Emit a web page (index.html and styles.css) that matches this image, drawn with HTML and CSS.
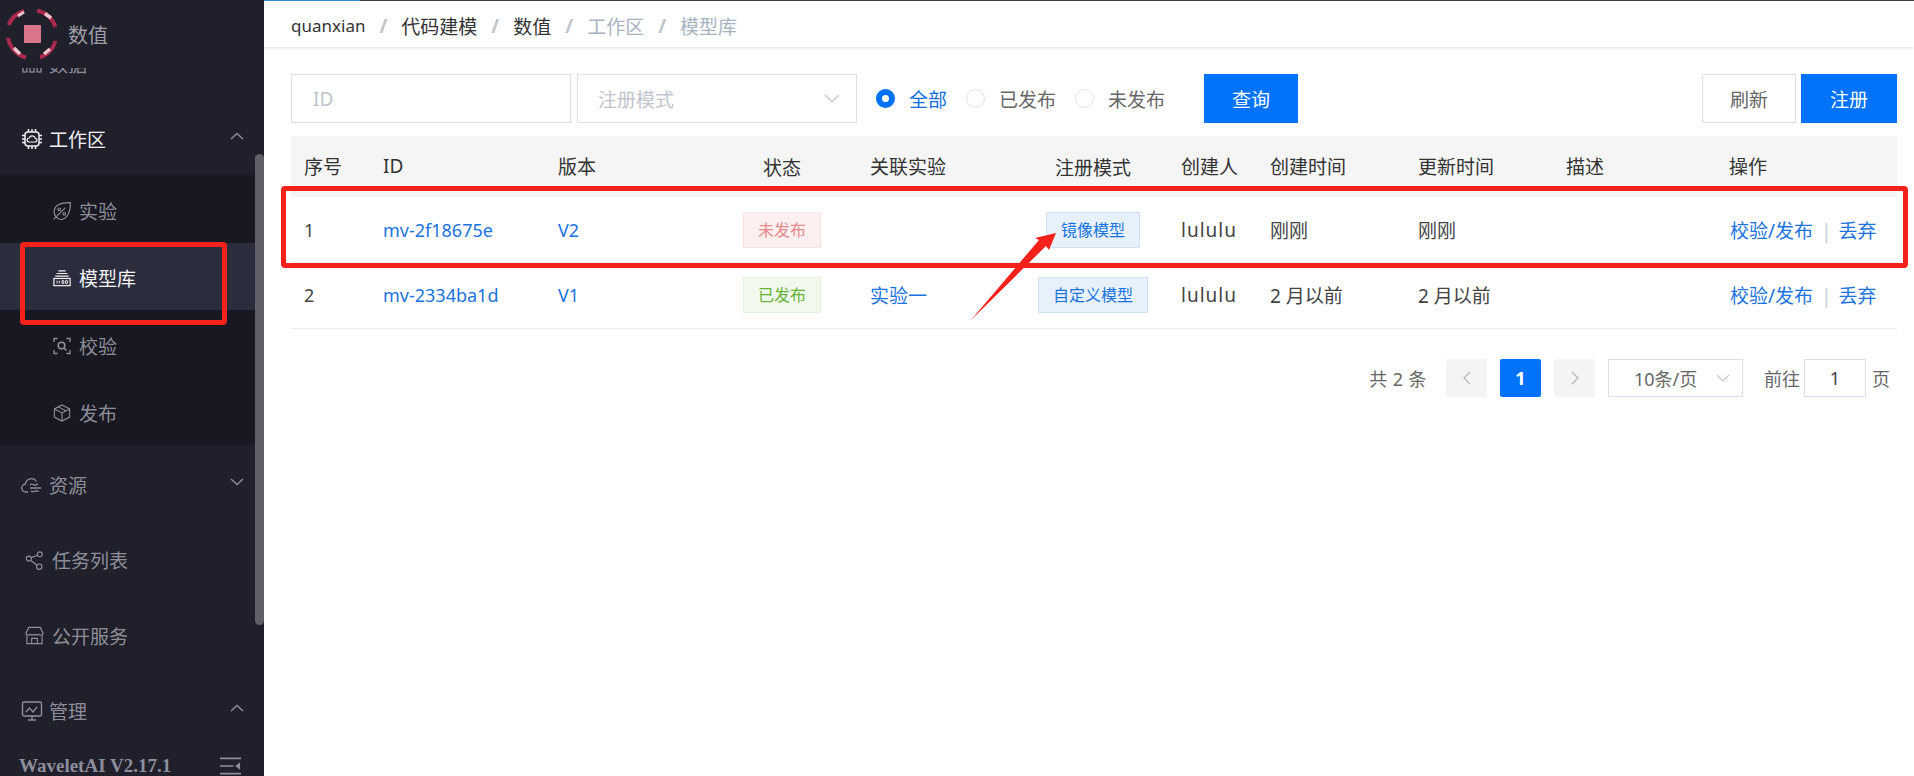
FILE: index.html
```html
<!DOCTYPE html>
<html lang="zh">
<head>
<meta charset="utf-8">
<title>模型库</title>
<link rel="stylesheet" href="styles.css">
</head>
<body>
<div class="app">
  <aside class="sidebar">
    <div class="brand">
      <svg class="logo" viewBox="0 0 52 52" width="52" height="52">
        <rect x="18" y="17" width="17" height="18" fill="#d8758a"/>
        <g fill="none" stroke-width="4">
          <path d="M2.500 17 A25 25 0 0 1 18 3" stroke="#a92a4d"/>
          <path d="M31 2.500 A25 25 0 0 1 49.500 19" stroke="#a92a4d"/>
          <path d="M49.500 33 A25 25 0 0 1 34 49.500" stroke="#a92a4d"/>
          <path d="M20 49.500 A25 25 0 0 1 2 30" stroke="#a92a4d"/>
          <path d="M39 5.500 L45 10" stroke="#eec3cb" stroke-width="3.500"/>
          <path d="M8 40 L14 46" stroke="#eec3cb" stroke-width="3.500"/>
          <path d="M38 46 L44 41" stroke="#eec3cb" stroke-width="3.500"/>
          <path d="M12 8 L18 4" stroke="#eec3cb" stroke-width="3"/>
        </g>
      </svg>
      <span class="brand-name">数值</span>
    </div>
    <nav class="menu">
      <div class="menu-row menu-clipped">
        <svg class="icon-top" viewBox="0 0 22 22" fill="none" stroke="currentColor" stroke-width="1.300"><rect x="2" y="5" width="4" height="14"/><rect x="9" y="5" width="4" height="14"/><rect x="16" y="5" width="4" height="14"/></svg>
        <span>数据</span>
      </div>
      <div class="menu-row menu-open">
        <svg class="icon-top" viewBox="0 0 22 22" fill="none" stroke="currentColor" stroke-width="1.500"><rect x="4" y="4" width="14" height="14" rx="3"/><path d="M7.500 1v3M11 1v3M14.500 1v3M7.500 18v3M11 18v3M14.500 18v3M1 7.500h3M1 11h3M1 14.500h3M18 7.500h3M18 11h3M18 14.500h3"/><path d="M8 14h6a1.800 1.800 0 0 0 .3-3.600A3.200 3.200 0 0 0 8.200 10 2 2 0 0 0 8 14z" stroke-width="1.200"/></svg>
        <span>工作区</span>
        <svg class="chev" viewBox="0 0 14 8" fill="none" stroke="currentColor" stroke-width="1.500"><path d="M1 7l6-5.500L13 7"/></svg>
      </div>
      <div class="submenu">
        <div class="sub-row">
          <svg class="icon-sub" viewBox="1 1 16 16" fill="none" stroke="currentColor" stroke-width="1"><path d="M2 9.500C2 5 6 1.500 16.500 1.500 16.500 11 13 16.500 8 16.500 4.500 16.500 2 13.500 2 9.500z"/><path d="M1.500 16.500 12 6"/><circle cx="6.500" cy="7.500" r="1.200"/><circle cx="11" cy="11.500" r="1.200"/></svg>
          <span>实验</span>
        </div>
        <div class="sub-row sub-active">
          <svg class="icon-sub" viewBox="0 0 20 20" fill="none" stroke="currentColor" stroke-width="1.300"><path d="M6 2h8M4 5h12M2.500 8h15"/><rect x="1" y="10.500" width="18" height="8"/><path d="M4.500 13v3M7 13v3M10 13h2v3h-2zM14 13h2v3h-2z" stroke-width="1"/></svg>
          <span>模型库</span>
        </div>
        <div class="sub-row">
          <svg class="icon-sub" viewBox="0 0 18 18" fill="none" stroke="currentColor" stroke-width="1.300"><path d="M1 5V1.500h3.500M13.500 1.500H17V5M1 13v3.500h3.500M13.500 16.500H17V13"/><circle cx="8.500" cy="8.500" r="3.300" stroke-width="1.600"/><path d="M11 11l2.500 2.500" stroke-width="1.600"/></svg>
          <span>校验</span>
        </div>
        <div class="sub-row">
          <svg class="icon-sub" viewBox="0 0 20 20" fill="none" stroke="currentColor" stroke-width="1.200"><path d="M10 1l8.500 4.500v9L10 19l-8.500-4.500v-9z"/><path d="M1.500 5.500 10 10l8.500-4.500M10 10v9M6 3.200l8.500 4.600"/></svg>
          <span>发布</span>
        </div>
      </div>
      <div class="menu-row">
        <svg class="icon-top" viewBox="0 0 22 22" fill="none" stroke="currentColor" stroke-width="1.300"><path d="M7 18H5a4 4 0 0 1-.5-8A6 6 0 0 1 15.500 7.500"/><path d="M9 11c2-2 3 0 5 0s2-1 3-1M9 14h11M10 17c2 1.500 3 0 5 0s2 .5 3 0"/></svg>
        <span>资源</span>
        <svg class="chev" viewBox="0 0 14 8" fill="none" stroke="currentColor" stroke-width="1.500"><path d="M1 1l6 5.500L13 1"/></svg>
      </div>
      <div class="menu-row menu-plain">
        <svg class="icon-plain" viewBox="0 0 20 20" fill="none" stroke="currentColor" stroke-width="1.200"><circle cx="4" cy="8" r="2.600"/><circle cx="15.500" cy="3.500" r="2.600"/><circle cx="15" cy="16.500" r="2.800"/><path d="M6.500 7 13.200 4.500M6 10l6.800 5"/></svg>
        <span>任务列表</span>
      </div>
      <div class="menu-row menu-plain">
        <svg class="icon-plain" viewBox="0 0 20 20" fill="none" stroke="currentColor" stroke-width="1.200"><path d="M4 1.500h12l3 6a2.500 2.500 0 0 1-4.500 1.200 3.500 3.500 0 0 1-4.500 0 3.500 3.500 0 0 1-4.500 0A2.500 2.500 0 0 1 1 7.500z"/><path d="M2 10v8.500h16V10M7 18.500V13h6v5.500"/></svg>
        <span>公开服务</span>
      </div>
      <div class="menu-row">
        <svg class="icon-top" viewBox="0 0 22 22" fill="none" stroke="currentColor" stroke-width="1.400"><rect x="1.500" y="2" width="19" height="14" rx="1.500"/><path d="M5 12l3.500-4 3.500 4 4-5M7 20h8M11 16v4"/></svg>
        <span>管理</span>
        <svg class="chev" viewBox="0 0 14 8" fill="none" stroke="currentColor" stroke-width="1.500"><path d="M1 7l6-5.500L13 7"/></svg>
      </div>
    </nav>
    <div class="side-foot">
      <span class="version">WaveletAI V2.17.1</span>
      <svg class="collapse" viewBox="0 0 22 18" fill="none" stroke="currentColor" stroke-width="1.800"><path d="M0 1h22M0 9h14M0 17h22"/><path d="M21 5v8l-5-4z" fill="currentColor" stroke="none"/></svg>
    </div>
    <div class="side-thumb"></div>
  </aside>

  <main class="main">
    <div class="top-line"><div class="top-progress"></div></div>
    <header class="crumbs">
      <span class="crumb-latin">quanxian</span><i>/</i><span>代码建模</span><i>/</i><span>数值</span><i>/</i><span class="crumb-muted">工作区</span><i>/</i><span class="crumb-muted">模型库</span>
    </header>
    <section class="content">
      <div class="filters">
        <div class="field field-id">ID</div>
        <div class="field field-select"><span>注册模式</span>
          <svg class="caret" viewBox="0 0 16 9" fill="none" stroke="currentColor" stroke-width="1.200"><path d="M1 1l7 7 7-7"/></svg>
        </div>
        <div class="radios">
          <label class="radio radio-on"><b></b>全部</label>
          <label class="radio"><b></b>已发布</label>
          <label class="radio"><b></b>未发布</label>
        </div>
        <button class="btn btn-primary btn-query">查询</button>
        <button class="btn btn-plain">刷新</button>
        <button class="btn btn-primary btn-reg">注册</button>
      </div>

      <table class="grid">
        <colgroup>
          <col class="c1"><col class="c2"><col class="c3"><col class="c4"><col class="c5"><col class="c6"><col class="c7"><col class="c8"><col class="c9"><col class="c10"><col class="c11">
        </colgroup>
        <thead>
          <tr>
            <th>序号</th><th>ID</th><th>版本</th><th class="center">状态</th><th>关联实验</th><th class="center">注册模式</th><th>创建人</th><th>创建时间</th><th>更新时间</th><th>描述</th><th>操作</th>
          </tr>
        </thead>
        <tbody>
          <tr>
            <td class="latin">1</td><td class="latin"><a>mv-2f18675e</a></td><td class="latin"><a>V2</a></td>
            <td class="center"><span class="tag tag-red">未发布</span></td><td></td>
            <td class="center"><span class="tag tag-blue">镜像模型</span></td>
            <td class="user">lululu</td><td>刚刚</td><td>刚刚</td><td></td>
            <td class="ops"><a>校验/发布</a><i>|</i><a>丢弃</a></td>
          </tr>
          <tr>
            <td class="latin">2</td><td class="latin"><a>mv-2334ba1d</a></td><td class="latin"><a>V1</a></td>
            <td class="center"><span class="tag tag-green">已发布</span></td><td><a>实验一</a></td>
            <td class="center"><span class="tag tag-blue">自定义模型</span></td>
            <td class="user">lululu</td><td>2 月以前</td><td>2 月以前</td><td></td>
            <td class="ops"><a>校验/发布</a><i>|</i><a>丢弃</a></td>
          </tr>
        </tbody>
      </table>

      <div class="pager">
        <span class="pg-total">共 2 条</span>
        <span class="pg-btn"><svg viewBox="0 0 8 14" fill="none" stroke="currentColor" stroke-width="1.300"><path d="M7 1 1 7l6 6"/></svg></span>
        <span class="pg-btn pg-on">1</span>
        <span class="pg-btn"><svg viewBox="0 0 8 14" fill="none" stroke="currentColor" stroke-width="1.300"><path d="M1 1l6 6-6 6"/></svg></span>
        <span class="pg-size">10条/页<svg class="caret-sm" viewBox="0 0 14 8" fill="none" stroke="currentColor" stroke-width="1.100"><path d="M1 1l6 6 6-6"/></svg></span>
        <span class="pg-label">前往</span>
        <span class="pg-input">1</span>
        <span class="pg-label pg-unit">页</span>
      </div>
    </section>
  </main>

  <div class="mark mark-side"></div>
  <div class="mark mark-row"></div>
  <svg class="mark-arrow" viewBox="0 0 100 100" width="100" height="100"><path d="M94 3 87 20l-3-4L9 90l68-80-4-2z" fill="#f5221b"/></svg>
</div>
</body>
</html>
```

FILE: styles.css
```css
* { box-sizing: border-box; }
html, body { margin: 0; height: 100%; overflow: hidden; }
body { font-family: "Noto Sans", "Noto Sans CJK SC", sans-serif; font-size: 19px; color: #333; background: #fff; }
.app { position: relative; display: flex; width: 1914px; height: 776px; overflow: hidden; }

.sidebar { position: relative; display: flex; flex-direction: column; flex: 0 0 264px; width: 264px; height: 776px; background: #1f202b; color: #8d8e99; font-size: 19px; }
.brand { position: relative; z-index: 1; display: flex; align-items: center; height: 68px; padding: 0 0 0 6px; background: #1f202b; }
.logo { display: block; }
.brand-name { margin-left: 10px; font-size: 20px; color: #9c9da6; }
.menu { flex: 1; min-height: 0; overflow: hidden; }
.menu-row { display: flex; align-items: center; height: 75.5px; padding: 4px 21px 0 21px; }
.menu-clipped { margin-top: -44px; }
.menu-open { color: #f0f0f3; }
.menu-plain { padding-left: 25px; }
.icon-top { width: 22px; height: 22px; margin-right: 6px; flex: none; }
.icon-plain { width: 19px; height: 19px; margin-right: 8px; flex: none; }
.chev { width: 14px; height: 8px; margin-left: auto; margin-right: -1px; margin-top: -6px; color: #8d8e99; }
.submenu { background: #171821; }
.sub-row { display: flex; align-items: center; height: 67.5px; padding: 4px 0 0 53px; }
.sub-active { background: #2b2d3d; color: #f4f4f6; }
.icon-sub { width: 18px; height: 18px; margin-right: 8px; flex: none; }
.side-foot { display: flex; align-items: center; justify-content: space-between; height: 29px; padding: 8px 23px 0 19px; }
.version { font-family: "Liberation Serif", serif; font-weight: 700; font-size: 19px; color: #8d8e9d; white-space: nowrap; }
.collapse { width: 21px; height: 18px; color: #8d8e99; }
.side-thumb { position: absolute; top: 154px; right: 0; width: 9px; height: 471px; background: #5f606a; border-radius: 5px; }

.main { flex: 1; min-width: 0; display: flex; flex-direction: column; }
.top-line { height: 1px; background: #3d414b; }
.top-progress { width: 96px; height: 1px; background: #2f8be6; }
.crumbs { display: flex; align-items: center; height: 46px; padding: 3px 0 0 27px; font-size: 19px; color: #333; box-shadow: 0 1px 3px rgba(0,0,0,.12); }
.crumbs i { margin: 0 14px; font-style: normal; font-weight: 700; color: #c0c4cc; }
.crumb-latin { font-size: 17px; }
.crumb-muted { color: #a6b3c0; }

.content { padding: 27px 17px 0 27px; }
.filters { display: flex; align-items: stretch; height: 49px; }
.field { display: flex; align-items: center; border: 1px solid #dcdfe6; color: #c0c4cc; font-size: 19px; }
.field-id { width: 280px; padding-left: 21px; }
.field-select { justify-content: space-between; width: 280px; margin-left: 6px; padding: 0 16px 0 20px; }
.caret { width: 16px; height: 9px; color: #c0c4cc; }
.radios { display: flex; align-items: center; margin-left: 19px; color: #666; font-size: 19px; }
.radio { display: flex; align-items: center; margin-right: 19px; }
.radio b { width: 19px; height: 19px; margin-right: 14px; border: 1px solid #e3e4e8; border-radius: 50%; background: #fff; }
.radio-on { color: #0f6fe0; }
.radio-on b { border: 6px solid #0073f5; }
.btn { border: 0; padding: 0; font: inherit; font-size: 19px; }
.btn-primary { background: #0072fb; color: #fff; }
.btn-query { width: 94px; margin-left: 20px; }
.btn-plain { width: 94px; margin-left: auto; background: #fff; border: 1px solid #dcdfe6; color: #666; }
.btn-reg { width: 96px; margin-left: 5px; }

.grid { width: 1606px; margin-top: 13px; border-collapse: collapse; table-layout: fixed; font-size: 19px; }
.c1 { width: 79px; } .c2 { width: 175px; } .c3 { width: 162px; } .c4 { width: 150px; } .c5 { width: 161px; }
.c6 { width: 150px; } .c7 { width: 89px; } .c8 { width: 148px; } .c9 { width: 148px; } .c10 { width: 163px; } .c11 { width: 181px; }
.grid th { height: 61px; padding: 0 0 2px 13px; background: #f5f5f5; font-weight: 400; text-align: left; font-size: 19px; color: #333; }
.grid td { height: 65.5px; padding: 0 0 0 13px; border-bottom: 1px solid #ebeef5; white-space: nowrap; color: #444; }
.grid th.center, .grid td.center { padding: 0; text-align: center; }
.grid a { color: #1a73e0; }
.grid td.latin { font-size: 18px; }
.grid td.user { letter-spacing: 1px; }
.grid td.ops { padding-left: 14px; }
.ops i { margin: 0 7px 0 8px; font-style: normal; color: #c8cbd0; }
.tag { display: inline-block; height: 36px; line-height: 34px; padding: 0 14px; border: 1px solid; font-size: 16px; }
.tag-red { background: #fef0f0; border-color: #fde2e2; color: #e58a8a; }
.tag-green { background: #f0f9eb; border-color: #e1f3d8; color: #67b23a; }
.tag-blue { background: #e6f1fc; border-color: #cfe3f7; color: #1a73e0; }

.pager { display: flex; align-items: center; justify-content: flex-end; height: 38px; margin-top: 30px; margin-right: 7px; font-size: 18px; color: #666; }
.pg-total { margin-right: 19px; letter-spacing: .4px; }
.pg-btn { display: flex; align-items: center; justify-content: center; width: 41px; height: 38px; margin-right: 13px; background: #f4f4f5; color: #b4b7bd; border-radius: 2px; }
.pg-btn svg { width: 8px; height: 14px; }
.pg-on { background: #0072fb; color: #fff; font-weight: 700; }
.pg-size { position: relative; display: flex; align-items: center; width: 135px; height: 38px; padding-left: 25px; border: 1px solid #dcdfe6; }
.caret-sm { width: 14px; height: 8px; margin-left: auto; margin-right: 12px; color: #c0c4cc; }
.pg-label { margin-left: 21px; }
.pg-input { display: flex; align-items: center; justify-content: center; width: 62px; height: 38px; margin-left: 4px; border: 1px solid #dcdfe6; color: #444; }
.pg-unit { margin-left: 6px; }

.mark { position: absolute; border: 5px solid #f5221b; border-radius: 4px; pointer-events: none; }
.mark-side { left: 20px; top: 242px; width: 207px; height: 83px; }
.mark-row { left: 281px; top: 186px; width: 1627px; height: 82px; }
.mark-arrow { position: absolute; left: 962px; top: 230px; }
```
